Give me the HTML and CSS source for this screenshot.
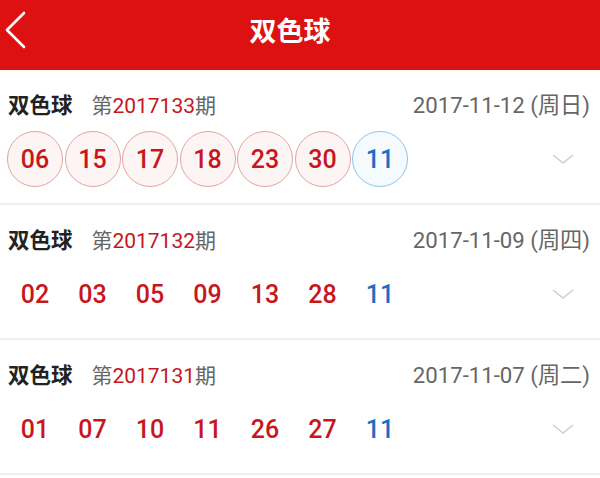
FILE: index.html
```html
<!DOCTYPE html>
<html lang="zh">
<head>
  <meta charset="UTF-8">
  <meta name="viewport" content="width=device-width, initial-scale=1.0">
  <title>双色球</title>
  <link rel="stylesheet" href="styles.css">
</head>
<body>
  <div class="top-bar">
    <svg class="back" width="24" height="40" viewBox="0 0 24 40">
      <polyline points="21,4 4,21 21,38" fill="none" stroke="#fff" stroke-width="2.6" stroke-linecap="round" stroke-linejoin="round"/>
    </svg>
    <div class="top-title">双色球</div>
  </div>

  <div class="draw">
    <div class="draw-head">
      <div class="draw-name">双色球 <span class="issue">第<em>2017133</em>期</span></div>
      <div class="draw-date">2017-11-12 (周日)</div>
    </div>
    <div class="draw-balls">
      <span class="ball red circle">06</span>
      <span class="ball red circle">15</span>
      <span class="ball red circle">17</span>
      <span class="ball red circle">18</span>
      <span class="ball red circle">23</span>
      <span class="ball red circle">30</span>
      <span class="ball blue circle">11</span>
      <svg class="more" width="24" height="12" viewBox="0 0 24 12"><polyline points="2,2 12,10 22,2" fill="none" stroke="#cfcfcf" stroke-width="1.6"/></svg>
    </div>
  </div>

  <div class="draw">
    <div class="draw-head">
      <div class="draw-name">双色球 <span class="issue">第<em>2017132</em>期</span></div>
      <div class="draw-date">2017-11-09 (周四)</div>
    </div>
    <div class="draw-balls">
      <span class="ball red">02</span>
      <span class="ball red">03</span>
      <span class="ball red">05</span>
      <span class="ball red">09</span>
      <span class="ball red">13</span>
      <span class="ball red">28</span>
      <span class="ball blue">11</span>
      <svg class="more" width="24" height="12" viewBox="0 0 24 12"><polyline points="2,2 12,10 22,2" fill="none" stroke="#cfcfcf" stroke-width="1.6"/></svg>
    </div>
  </div>

  <div class="draw">
    <div class="draw-head">
      <div class="draw-name">双色球 <span class="issue">第<em>2017131</em>期</span></div>
      <div class="draw-date">2017-11-07 (周二)</div>
    </div>
    <div class="draw-balls">
      <span class="ball red">01</span>
      <span class="ball red">07</span>
      <span class="ball red">10</span>
      <span class="ball red">11</span>
      <span class="ball red">26</span>
      <span class="ball red">27</span>
      <span class="ball blue">11</span>
      <svg class="more" width="24" height="12" viewBox="0 0 24 12"><polyline points="2,2 12,10 22,2" fill="none" stroke="#cfcfcf" stroke-width="1.6"/></svg>
    </div>
  </div>
</body>
</html>
```

FILE: styles.css
```css
body {
  margin: 0;
  padding: 0;
  background-color: #fff;
  font-family: 'Roboto', 'Noto Sans CJK SC', sans-serif;
  width: 600px;
  height: 478px;
  overflow: hidden;
}

.top-bar {
  position: relative;
  height: 70px;
  background-color: #dd1111;
  display: flex;
  justify-content: center;
  align-items: center;
}

.top-bar .back {
  position: absolute;
  left: 3px;
  top: 9px;
}

.top-title {
  color: #fff;
  font-family: 'Noto Sans CJK SC', sans-serif;
  font-size: 27px;
  font-weight: 700;
  margin-top: -12px;
  margin-right: 20px;
}

.draw {
  height: 133px;
  border-bottom: 2px solid #eeeeee;
  padding: 0 10px 0 7px;
}

.draw-head {
  display: flex;
  justify-content: space-between;
  align-items: center;
  padding-top: 20px;
  height: 26px;
}

.draw-name {
  font-family: 'Noto Sans CJK SC', sans-serif;
  font-size: 21.5px;
  font-weight: 700;
  color: #222;
  padding-left: 1px;
}

.issue {
  font-family: 'Roboto', 'Noto Sans CJK SC', sans-serif;
  font-weight: 400;
  font-size: 21px;
  color: #666;
  margin-left: 14px;
}

.issue em {
  font-style: normal;
  color: #c4161c;
}

.draw-date {
  font-family: 'Roboto', 'Noto Sans CJK SC', sans-serif;
  font-size: 22.2px;
  color: #666;
}

.draw-balls {
  display: flex;
  align-items: center;
  gap: 1.5px;
  margin-top: 15px;
  height: 56px;
}

.ball {
  box-sizing: border-box;
  width: 56px;
  height: 56px;
  display: flex;
  justify-content: center;
  align-items: center;
  font-size: 25px;
  font-weight: 500;
  border-radius: 50%;
}

.ball.red {
  color: #c8161d;
}

.ball.blue {
  color: #1a6fc4;
}

.ball.red.circle {
  background-color: #fdf4f4;
  border: 1px solid #e0a4a4;
}

.ball.blue.circle {
  background-color: #f4fafe;
  border: 1px solid #8fc4e6;
}

.more {
  margin-left: auto;
  margin-right: 15px;
}
```
